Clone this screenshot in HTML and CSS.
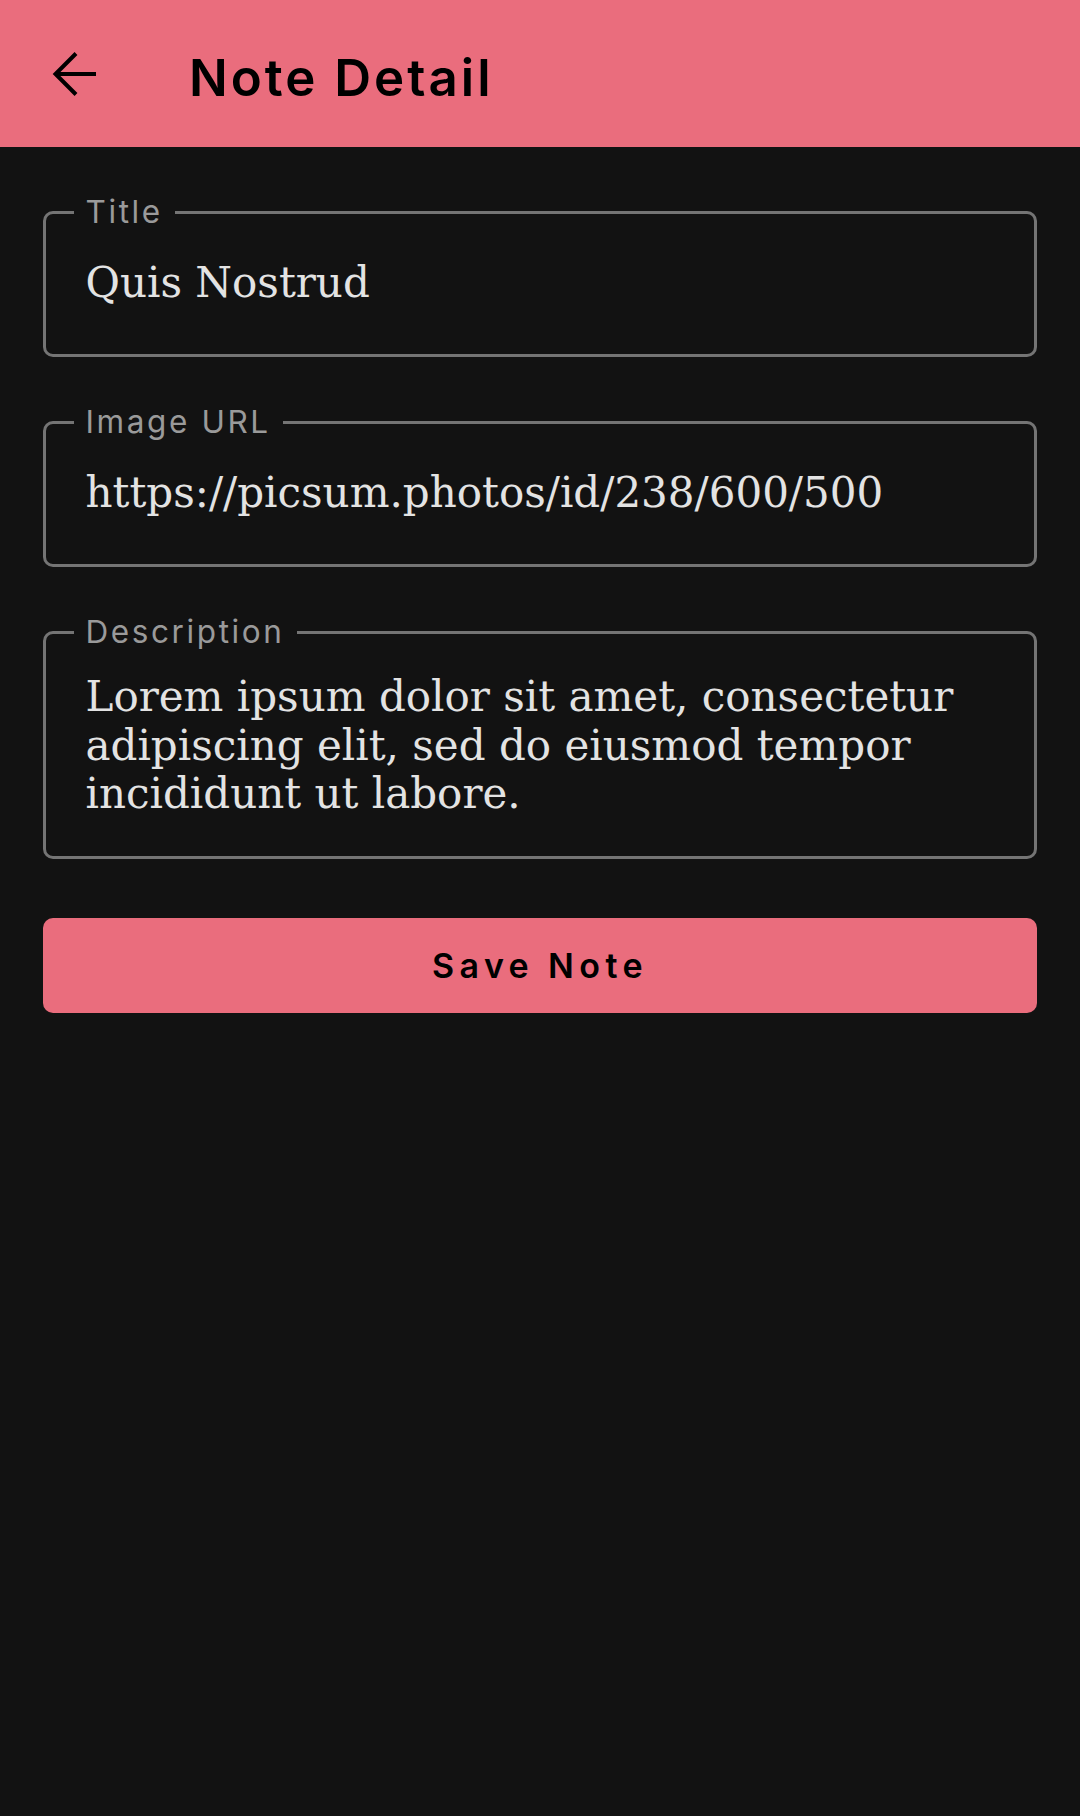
FILE: index.html
```html
<!DOCTYPE html>
<html lang="en">
<head>
<meta charset="utf-8">
<title>Note Detail</title>
<link rel="stylesheet" href="styles.css">
</head>
<body>
<div class="screen">
  <header class="appbar">
    <button class="back" aria-label="Back">
      <svg width="48" height="48" viewBox="0 0 48 48" aria-hidden="true">
        <path d="M45 24H5 M25 3.5 L4.5 24 L25 44.5" fill="none" stroke="#000" stroke-width="4" stroke-linejoin="miter"/>
      </svg>
    </button>
    <h1 class="appbar-title">Note Detail</h1>
  </header>
  <main class="form">
    <fieldset class="field">
      <legend class="field-label">Title</legend>
      <div class="field-value">Quis Nostrud</div>
    </fieldset>
    <fieldset class="field">
      <legend class="field-label">Image URL</legend>
      <div class="field-value">https://picsum.photos/id/238/600/500</div>
    </fieldset>
    <fieldset class="field field-multi">
      <legend class="field-label">Description</legend>
      <div class="field-value">Lorem ipsum dolor sit amet, consectetur adipiscing elit, sed do eiusmod tempor incididunt ut labore.</div>
    </fieldset>
    <button class="save">Save Note</button>
  </main>
</div>
</body>
</html>
```

FILE: styles.css
```css
* { box-sizing: border-box; }

html, body {
  margin: 0;
  padding: 0;
  background: #121212;
}

.screen {
  width: 1080px;
  min-height: 1816px;
  background: #121212;
}

.appbar {
  height: 147px;
  background: #ea6d7d;
  display: flex;
  align-items: center;
  padding-left: 51px;
}

.back {
  width: 48px;
  height: 48px;
  padding: 0;
  margin: 0;
  border: 0;
  background: transparent;
  display: flex;
  align-items: center;
  justify-content: center;
}

.appbar-title {
  margin: 8px 0 0 90px;
  font-family: "Inter", "Liberation Sans", sans-serif;
  font-weight: 600;
  font-size: 51px;
  letter-spacing: 3px;
  color: #000;
}

.form {
  padding: 46px 43px 0 43px;
  display: flex;
  flex-direction: column;
  gap: 46px;
}

.field {
  margin: 0;
  min-width: 0;
  border: 3px solid #747474;
  border-radius: 10px;
  padding: 28px 40px 47px 39.5px;
}

.field-multi {
  padding-top: 22px;
  padding-bottom: 37px;
}

.field-label {
  margin-left: -12px;
  padding: 0 12px;
  font-family: "Inter", "Liberation Sans", sans-serif;
  font-size: 31.5px;
  line-height: 38px;
  letter-spacing: 2.6px;
  color: #9a9a9a;
}

.field-value {
  font-family: "DejaVu Serif", "Liberation Serif", serif;
  font-size: 42px;
  line-height: 48px;
  color: #e3e3e3;
}

.field-multi .field-value {
  line-height: 48.5px;
}

.save {
  margin-top: 13px;
  height: 95px;
  border: 0;
  border-radius: 10px;
  background: #ea6d7d;
  color: #000;
  font-family: "Inter", "Liberation Sans", sans-serif;
  font-weight: 600;
  font-size: 34px;
  letter-spacing: 5.4px;
  display: flex;
  align-items: center;
  justify-content: center;
  padding: 0;
}
```
